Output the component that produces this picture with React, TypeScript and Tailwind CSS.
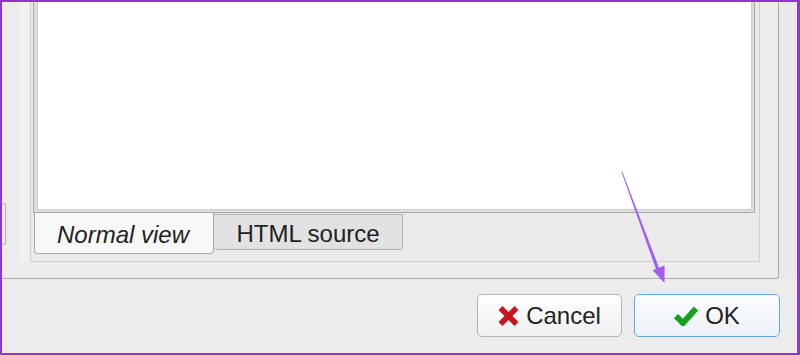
import React from 'react';

const font = { fontFamily: '"Liberation Sans", Arial, sans-serif' };

const RedX = () => (
  <svg width="21" height="20" viewBox="0 0 21 20">
    <path d="M2.5 2 L18.5 18 M18.5 2 L2.5 18" stroke="#c8141e" strokeWidth="5.5" strokeLinecap="butt" fill="none" />
  </svg>
);

const GreenCheck = () => (
  <svg width="24" height="20" viewBox="0 0 24 20">
    <path d="M2 10 L9 17 L22 2.5" stroke="#16a21e" strokeWidth="6" strokeLinejoin="miter" fill="none" />
  </svg>
);

const Arrow = () => (
  <svg className="absolute left-[-2px] top-[-2px] pointer-events-none" width="800" height="355">
    <polygon points="621.4,171.8 622.2,171.6 660.4,271.4 657.2,272.6" fill="#a45df2" />
    <polygon points="664.5,283 664.6,265.6 652.6,270.3" fill="#a45df2" />
  </svg>
);

export default function App() {
  return (
    <div
      className="relative w-[800px] h-[355px] overflow-hidden bg-[#ececec] border-2 border-r-[3px] border-[#8e35d6] flex flex-col text-[#222]"
      style={font}
    >
      {/* upper frame */}
      <div className="flex h-[277px]">
        <div className="w-[777px] h-[277px] border-r border-b border-[#ababab] rounded-br-[3px] flex">
          <div className="w-[18px] pt-[201px]">
            <div className="w-[4px] h-[42px] border border-l-0 border-[#b3b3b3] rounded-r-[3px] bg-[#ededed]" />
          </div>
          <div className="w-[10px] h-[260px] bg-[#f1f1f1]" />
          <div className="w-[730px] h-[260px] border-l border-r border-b border-[#d0d0d0] bg-[#eaeaea] pl-[2px] flex flex-col">
            {/* editor */}
            <div className="w-[722px] h-[211px] border-l border-r border-b border-[#a8a8a8] bg-[#dedede] pl-[3px] pr-[2px] pb-[2px]">
              <div className="w-full h-full bg-white border-l border-r border-b border-[#cfcfcf]" />
            </div>
            {/* tabs */}
            <div className="flex items-start pl-[1px]">
              <div className="w-[180px] h-[41px] bg-[#f8f8f8] border-l border-r border-b border-[#a9a9a9] rounded-b-[4px] flex items-center justify-center italic text-[24px] pt-[3px] pr-[2px]">
                Normal view
              </div>
              <div className="w-[189px] h-[36px] mt-[1px] bg-[#e2e2e2] border border-l-0 border-[#b2b2b2] rounded-b-[4px] flex items-center justify-center text-[24px] pt-[3px]">
                HTML source
              </div>
            </div>
          </div>
        </div>
        <div className="flex-1 bg-[#e9e9e9]" />
      </div>

      {/* buttons */}
      <div className="flex justify-end gap-[12px] pt-[15px] pr-[17px]">
        <button className="w-[145px] h-[43px] border border-[#b3b3b3] rounded-[5px] bg-gradient-to-b from-white to-[#efefef] flex items-center justify-center gap-[7px] text-[24px] text-[#222]">
          <RedX />
          <span>Cancel</span>
        </button>
        <button className="w-[146px] h-[43px] border border-[#62a9ec] rounded-[5px] bg-gradient-to-b from-[#fbfdff] to-[#edf1f5] flex items-center justify-center gap-[7px] text-[24px] text-[#222]">
          <GreenCheck />
          <span>OK</span>
        </button>
      </div>

      <Arrow />
    </div>
  );
}
